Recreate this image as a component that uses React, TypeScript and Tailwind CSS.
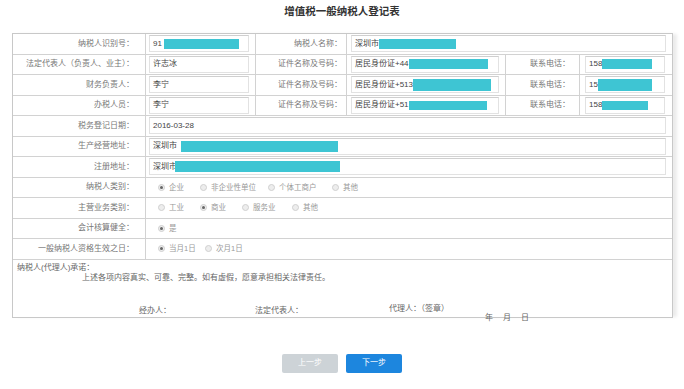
import React from "react";

const CYAN = "bg-[#3ec5d3]";

interface IBoxProps {
  className: string;
  children?: React.ReactNode;
}

const Box = ({ className, children }: IBoxProps) => (
  <div
    className={`h-[17px] border border-[#e2e2e2] border-t-[#cfcfcf] bg-white flex items-center pl-[3px] text-[8px] text-[#444] whitespace-nowrap overflow-hidden ${className}`}
  >
    {children}
  </div>
);

interface IMaskProps {
  className: string;
}

const Mask = ({ className }: IMaskProps) => (
  <span className={`inline-block shrink-0 ${CYAN} ${className}`} />
);

interface IRadioProps {
  label: string;
  checked?: boolean;
  className?: string;
}

const Radio = ({ label, checked, className = "" }: IRadioProps) => (
  <span className={`flex items-center shrink-0 ${className}`}>
    <span className="w-[7px] h-[7px] rounded-full border border-[#d0d0d0] bg-[#ededed] flex items-center justify-center">
      {checked && <span className="w-[3px] h-[3px] rounded-full bg-[#666]" />}
    </span>
    <span className="ml-[4px] text-[7.5px] text-[#999]">{label}</span>
  </span>
);

const Row = ({ children }: { children: React.ReactNode }) => (
  <div className="flex h-[20.5px] border-b border-[#d2d2d2]">{children}</div>
);

const Label1 = ({ children }: { children: React.ReactNode }) => (
  <div className="w-[133px] shrink-0 border-r border-[#d2d2d2] flex items-center justify-end pr-[11px] text-[8px] text-[#777]">
    {children}
  </div>
);

const Label2 = ({ children }: { children: React.ReactNode }) => (
  <div className="w-[91px] shrink-0 border-r border-[#d2d2d2] flex items-center justify-end pr-[4px] text-[8px] text-[#777]">
    {children}
  </div>
);

const Label3 = ({ children }: { children: React.ReactNode }) => (
  <div className="w-[74px] shrink-0 border-r border-[#d2d2d2] flex items-center justify-end pr-[9px] text-[8px] text-[#777]">
    {children}
  </div>
);

const PersonRow = ({
  label,
  name,
  cert,
  certMask,
  phone,
  phoneMask,
}: {
  label: string;
  name: string;
  cert: string;
  certMask: string;
  phone: string;
  phoneMask: string;
}) => (
  <Row>
    <Label1>{label}</Label1>
    <div className="w-[110px] shrink-0 border-r border-[#d2d2d2] flex items-center">
      <Box className="ml-[3px] w-[100px]">{name}</Box>
    </div>
    <Label2>证件名称及号码：</Label2>
    <div className="w-[159px] shrink-0 border-r border-[#d2d2d2] flex items-center">
      <Box className="ml-[4px] w-[148px]">
        {cert}
        <Mask className={certMask} />
      </Box>
    </div>
    <Label3>联系电话：</Label3>
    <div className="flex-1 flex items-center">
      <Box className="ml-[5px] w-[80px]">
        {phone}
        <Mask className={phoneMask} />
      </Box>
    </div>
  </Row>
);

export default function App() {
  return (
    <div className="w-[684px] h-[389px] bg-white overflow-hidden font-['Liberation_Sans','Noto_Sans_CJK_SC',sans-serif]">
      <h1 className="h-[33px] pt-[4px] text-center text-[10.5px] leading-[14px] font-bold text-[#333]">
        增值税一般纳税人登记表
      </h1>

      <div className="ml-[12px] w-[661px] border border-[#c8c8c8] shadow-[5px_0_3px_-1px_#ececec]">
        <Row>
          <Label1>纳税人识别号：</Label1>
          <div className="w-[110px] shrink-0 border-r border-[#d2d2d2] flex items-center">
            <Box className="ml-[3px] w-[100px]">
              91
              <Mask className="ml-[2px] w-[75px] h-[10px]" />
            </Box>
          </div>
          <Label2>纳税人名称：</Label2>
          <div className="flex-1 flex items-center">
            <Box className="ml-[4px] w-[315px]">
              深圳市
              <Mask className="w-[77px] h-[10px]" />
            </Box>
          </div>
        </Row>

        <PersonRow
          label="法定代表人（负责人、业主）："
          name="许志冰"
          cert="居民身份证+44"
          certMask="w-[79px] h-[10px]"
          phone="158"
          phoneMask="w-[50px] h-[10px]"
        />
        <PersonRow
          label="财务负责人："
          name="李宁"
          cert="居民身份证+513"
          certMask="w-[78px] h-[12px]"
          phone="15"
          phoneMask="w-[54px] h-[12px]"
        />
        <PersonRow
          label="办税人员："
          name="李宁"
          cert="居民身份证+51"
          certMask="w-[78px] h-[9px]"
          phone="158"
          phoneMask="w-[46px] h-[9px]"
        />

        <Row>
          <Label1>税务登记日期：</Label1>
          <div className="flex-1 flex items-center">
            <Box className="ml-[3px] w-[517px]">2016-03-28</Box>
          </div>
        </Row>
        <Row>
          <Label1>生产经营地址：</Label1>
          <div className="flex-1 flex items-center">
            <Box className="ml-[3px] w-[517px]">
              深圳市
              <Mask className="ml-[4px] w-[157px] h-[11px]" />
            </Box>
          </div>
        </Row>
        <Row>
          <Label1>注册地址：</Label1>
          <div className="flex-1 flex items-center">
            <Box className="ml-[3px] w-[517px]">
              深圳市
              <Mask className="-ml-[2px] w-[165px] h-[11px]" />
            </Box>
          </div>
        </Row>

        <Row>
          <Label1>纳税人类别：</Label1>
          <div className="flex-1 flex items-center pl-[12px]">
            <Radio label="企业" checked className="w-[42px]" />
            <Radio label="非企业性单位" className="w-[68px]" />
            <Radio label="个体工商户" className="w-[64px]" />
            <Radio label="其他" />
          </div>
        </Row>
        <Row>
          <Label1>主营业务类别：</Label1>
          <div className="flex-1 flex items-center pl-[12px]">
            <Radio label="工业" className="w-[42px]" />
            <Radio label="商业" checked className="w-[42px]" />
            <Radio label="服务业" className="w-[50px]" />
            <Radio label="其他" />
          </div>
        </Row>
        <Row>
          <Label1>会计核算健全：</Label1>
          <div className="flex-1 flex items-center pl-[12px]">
            <Radio label="是" checked />
          </div>
        </Row>
        <Row>
          <Label1>一般纳税人资格生效之日：</Label1>
          <div className="flex-1 flex items-center pl-[12px]">
            <Radio label="当月1日" checked className="w-[47px]" />
            <Radio label="次月1日" />
          </div>
        </Row>

        <div className="h-[57px] pt-[3px] text-[8px] leading-[10px] text-[#666]">
          <p className="pl-[4px]">纳税人(代理人)承诺：</p>
          <p className="pl-[69px]">上述各项内容真实、可靠、完整。如有虚假，愿意承担相关法律责任。</p>
          <div className="flex items-start mt-[23px] pl-[126px]">
            <span className="w-[116px] shrink-0">经办人：</span>
            <span className="w-[134px] shrink-0">法定代表人：</span>
            <span className="w-[96px] shrink-0 -mt-[2px]">代理人：（签章）</span>
            <span className="flex gap-[10px] mt-[7px]">
              <span>年</span>
              <span>月</span>
              <span>日</span>
            </span>
          </div>
        </div>
      </div>

      <div className="flex justify-center gap-[8px] mt-[36px]">
        <button className="w-[56px] h-[19px] rounded-[2px] bg-[#cdd3d7] text-white text-[8px]">
          上一步
        </button>
        <button className="w-[56px] h-[19px] rounded-[2px] bg-[#1d86de] text-white text-[8px]">
          下一步
        </button>
      </div>
    </div>
  );
}
